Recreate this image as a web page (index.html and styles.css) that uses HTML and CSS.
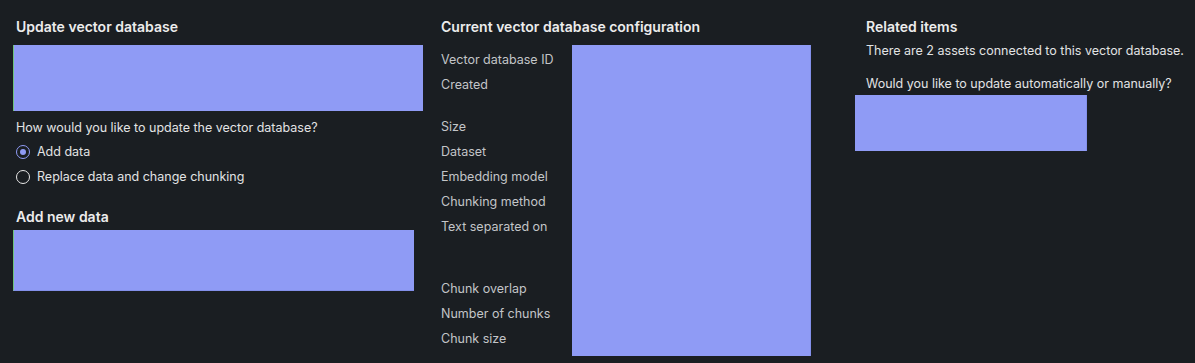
FILE: index.html
```html
<!DOCTYPE html>
<html lang="en">
<head>
    <meta charset="UTF-8">
    <title>Update vector database</title>
    <link rel="stylesheet" href="styles.css">
</head>
<body>
    <div class="panels">
        <!-- Update form -->
        <section class="panel panel-update">
            <h2>Update vector database</h2>
            <div class="redacted redacted-intro"></div>
            <p class="question">How would you like to update the vector database?</p>
            <label class="radio-row">
                <span class="radio radio-checked"></span>
                Add data
            </label>
            <label class="radio-row">
                <span class="radio"></span>
                Replace data and change chunking
            </label>
            <h2 class="sub-heading">Add new data</h2>
            <div class="redacted redacted-upload"></div>
        </section>

        <!-- Current configuration -->
        <section class="panel panel-config">
            <h2>Current vector database configuration</h2>
            <div class="config">
                <div class="config-labels">
                    <div class="config-row">Vector database ID</div>
                    <div class="config-row row-created">Created</div>
                    <div class="config-row">Size</div>
                    <div class="config-row">Dataset</div>
                    <div class="config-row">Embedding model</div>
                    <div class="config-row">Chunking method</div>
                    <div class="config-row row-separator">Text separated on</div>
                    <div class="config-row">Chunk overlap</div>
                    <div class="config-row">Number of chunks</div>
                    <div class="config-row">Chunk size</div>
                </div>
                <div class="redacted redacted-values"></div>
            </div>
        </section>

        <!-- Related items -->
        <section class="panel panel-related">
            <h2>Related items</h2>
            <p class="related-text">There are 2 assets connected to this vector database.</p>
            <p class="related-text related-ask">Would you like to update automatically or manually?</p>
            <div class="redacted redacted-choice"></div>
        </section>
    </div>
</body>
</html>
```

FILE: styles.css
```css
:root {
    --bg: #1a1e22;
    --text: #e2e3e4;
    --muted: #c3c5c8;
    --redacted: #8f9bf5;
    --redacted-edge: #8390ea;
    --accent: #8f9bf5;
}

body {
    margin: 0;
    background-color: var(--bg);
    color: var(--text);
    font-family: 'Inter', 'Noto Sans', sans-serif;
    font-size: 12.5px;
    line-height: 20px;
}

.panels {
    display: grid;
    grid-template-columns: 410px 396px 1fr;
    column-gap: 18px;
    padding: 17px 0 0 13px;
}

h2 {
    margin: 0 0 8px;
    font-size: 14px;
    font-weight: 600;
    line-height: 20px;
    color: #ececec;
}

p {
    margin: 0;
}

.redacted {
    background: var(--redacted);
    box-sizing: border-box;
}

/* Update form */
.panel-update h2,
.panel-update .question,
.radio-row {
    margin-left: 3px;
}

.redacted-intro {
    height: 66px;
    border-left: 1px solid #6fc47a;
}

.question {
    margin-top: 7px;
}

.radio-row {
    display: flex;
    align-items: center;
    gap: 7px;
    height: 25px;
}

.radio-row:first-of-type {
    margin-top: 1px;
}

.radio {
    width: 14px;
    height: 14px;
    box-sizing: border-box;
    border: 1.5px solid #e8e8e8;
    border-radius: 50%;
    display: flex;
    align-items: center;
    justify-content: center;
}

.radio-checked {
    border-color: var(--accent);
}

.radio-checked::after {
    content: "";
    width: 6px;
    height: 6px;
    border-radius: 50%;
    background: var(--accent);
}

.sub-heading {
    margin-top: 18px;
    margin-bottom: 3px;
}

.redacted-upload {
    width: 401px;
    height: 61px;
    border-left: 1px solid #6fc47a;
    border-bottom: 1px solid var(--redacted-edge);
}

/* Configuration */
.config {
    display: flex;
}

.config-labels {
    width: 131px;
    padding-top: 2px;
    color: var(--muted);
}

.config-row {
    height: 25px;
    line-height: 25px;
}

.row-created {
    height: 42px;
}

.row-separator {
    height: 62px;
}

.redacted-values {
    width: 239px;
    height: 311px;
    border-right: 1px solid var(--redacted-edge);
}

/* Related items */
.panel-related h2,
.related-text {
    margin-left: 11px;
}

.panel-related h2 {
    margin-bottom: 4px;
}

.related-text {
    white-space: nowrap;
}

.related-ask {
    margin-top: 13px;
}

.redacted-choice {
    width: 232px;
    height: 56px;
    margin-top: 1px;
    border-right: 1px solid var(--redacted-edge);
}
```
